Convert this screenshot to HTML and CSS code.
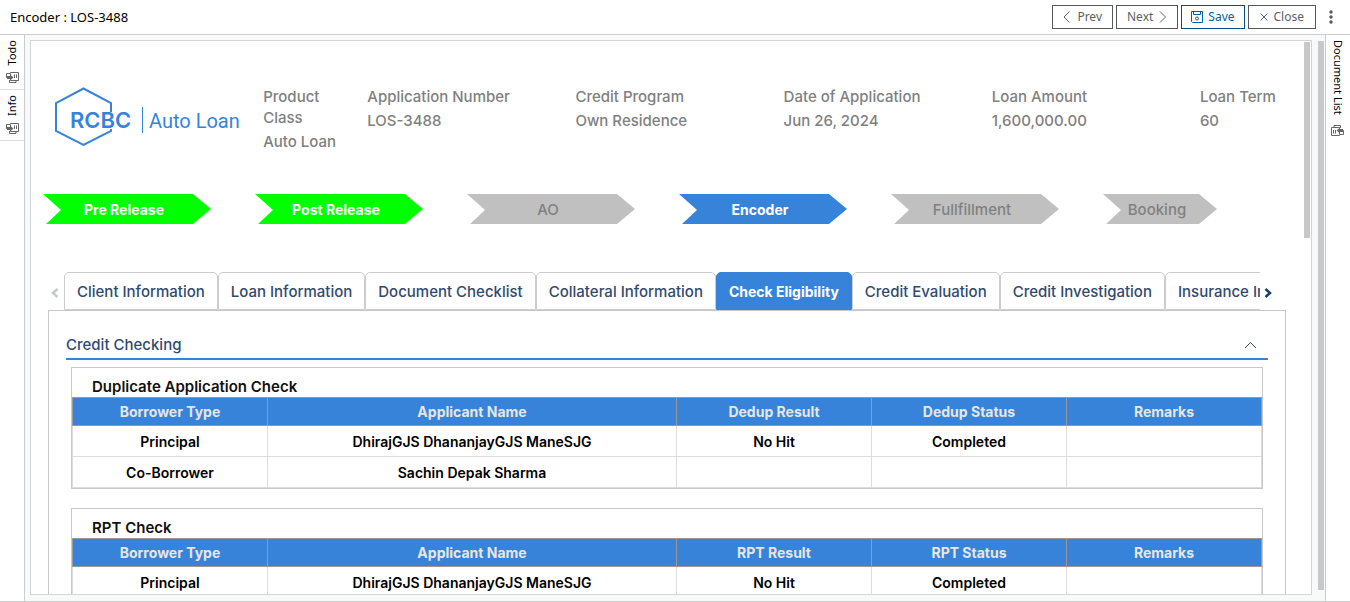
FILE: index.html
```html
<!DOCTYPE html>
<html lang="en">
<head>
<meta charset="utf-8">
<meta name="viewport" content="width=device-width, initial-scale=1">
<title>Encoder : LOS-3488</title>
<link rel="stylesheet" href="styles.css">
</head>
<body>
<svg class="defs" aria-hidden="true">
  <symbol id="restore" viewBox="0 0 13 11">
    <path d="M4.500 1.500V.5h8v8h-8zM8.500 2.500v3.500M10.500 2.500v3.500M3.500 8v2.500h6.500V8.500M4 1.500H.5v4H2" fill="none" stroke="currentColor"/>
    <path d="M1 4h3V2.500L7.500 5.500 4 8.500V7H1z" fill="currentColor"/>
  </symbol>
</svg>
<div class="app">
  <header class="topbar">
    <h1 class="topbar-title">Encoder : LOS-3488</h1>
    <div class="actions">
      <button class="btn" type="button"><svg width="8" height="12" viewBox="0 0 8 12"><path d="M6.500 .5 1 6l5.500 5.500"/></svg>Prev</button>
      <button class="btn" type="button">Next<svg width="8" height="12" viewBox="0 0 8 12"><path d="M1 .5 6.500 6 1 11.500"/></svg></button>
      <button class="btn btn-save" type="button"><svg width="12" height="12" viewBox="0 0 12 12"><path d="M.5.500h11v11H1.500l-1-1zM2.500.500v3h7v-3"/><circle cx="6" cy="7.500" r="1.500"/></svg>Save</button>
      <button class="btn btn-close" type="button"><svg width="8" height="8" viewBox="0 0 8 8"><path d="m.5.500 7 7m0-7-7 7"/></svg>Close</button>
      <button class="more" type="button" aria-label="More"><svg width="4" height="14" viewBox="0 0 4 14"><circle cx="2" cy="2" r="1.700"/><circle cx="2" cy="7" r="1.700"/><circle cx="2" cy="12" r="1.700"/></svg></button>
    </div>
  </header>
  <div class="body">
    <nav class="rail rail-left" aria-label="Side panels">
      <button class="rail-item" type="button"><span class="rail-text up">Todo</span><svg width="13" height="11"><use href="#restore"/></svg></button>
      <button class="rail-item" type="button"><span class="rail-text up">Info</span><svg width="13" height="11"><use href="#restore"/></svg></button>
    </nav>
    <main class="stage">
      <div class="panel">
        <div class="content">
          <section class="summary">
            <svg class="logo" width="186" height="62" viewBox="0 0 186 62" role="img" aria-label="RCBC Auto Loan">
              <path d="M56 26V17L28.500 2.500 1 17v28l27.500 14L56 45v-2" fill="none" stroke="currentColor" stroke-width="2"/>
              <text class="logo-brand" x="15" y="42">RCBC</text>
              <path d="M87.500 21v26" stroke="currentColor"/>
              <text class="logo-product" x="94" y="42">Auto Loan</text>
            </svg>
            <dl class="field"><dt>Product Class</dt><dd>Auto Loan</dd></dl>
            <dl class="field"><dt>Application Number</dt><dd>LOS-3488</dd></dl>
            <dl class="field"><dt>Credit Program</dt><dd>Own Residence</dd></dl>
            <dl class="field"><dt>Date of Application</dt><dd>Jun 26, 2024</dd></dl>
            <dl class="field"><dt>Loan Amount</dt><dd>1,600,000.00</dd></dl>
            <dl class="field field-last"><dt>Loan Term</dt><dd>60</dd></dl>
          </section>
          <ol class="steps">
            <li class="step done">Pre Release</li>
            <li class="step done">Post Release</li>
            <li class="step">AO</li>
            <li class="step current">Encoder</li>
            <li class="step">Fullfillment</li>
            <li class="step">Booking</li>
          </ol>
          <div class="tabbar">
            <button class="tab-arrow off" type="button" aria-label="Previous tabs"><svg width="8" height="10" viewBox="0 0 8 10"><path d="M6.500 1 2 5l4.500 4"/></svg></button>
            <div class="tabs" role="tablist">
              <button class="tab" role="tab" type="button">Client Information</button>
              <button class="tab" role="tab" type="button">Loan Information</button>
              <button class="tab" role="tab" type="button">Document Checklist</button>
              <button class="tab" role="tab" type="button">Collateral Information</button>
              <button class="tab active" role="tab" type="button" aria-selected="true">Check Eligibility</button>
              <button class="tab" role="tab" type="button">Credit Evaluation</button>
              <button class="tab" role="tab" type="button">Credit Investigation</button>
              <button class="tab" role="tab" type="button">Insurance Information</button>
            </div>
            <button class="tab-arrow" type="button" aria-label="Next tabs"><svg width="8" height="10" viewBox="0 0 8 10"><path d="M1.500 1 6 5 1.500 9"/></svg></button>
          </div>
          <section class="tab-panel">
            <button class="section-head" type="button">Credit Checking<svg width="13" height="8" viewBox="0 0 13 8"><path d="m1 7 5.500-5.500L12 7"/></svg></button>
            <div class="card">
              <h2 class="card-title">Duplicate Application Check</h2>
              <table class="grid">
                <colgroup><col class="c-type"><col class="c-name"><col class="c-type"><col class="c-type"><col class="c-type"></colgroup>
                <thead><tr><th>Borrower Type</th><th>Applicant Name</th><th>Dedup Result</th><th>Dedup Status</th><th>Remarks</th></tr></thead>
                <tbody>
                  <tr><td>Principal</td><td>DhirajGJS DhananjayGJS ManeSJG</td><td>No Hit</td><td>Completed</td><td></td></tr>
                  <tr><td>Co-Borrower</td><td>Sachin Depak Sharma</td><td></td><td></td><td></td></tr>
                </tbody>
              </table>
            </div>
            <div class="card">
              <h2 class="card-title">RPT Check</h2>
              <table class="grid">
                <colgroup><col class="c-type"><col class="c-name"><col class="c-type"><col class="c-type"><col class="c-type"></colgroup>
                <thead><tr><th>Borrower Type</th><th>Applicant Name</th><th>RPT Result</th><th>RPT Status</th><th>Remarks</th></tr></thead>
                <tbody>
                  <tr><td>Principal</td><td>DhirajGJS DhananjayGJS ManeSJG</td><td>No Hit</td><td>Completed</td><td></td></tr>
                </tbody>
              </table>
            </div>
          </section>
        </div>
        <div class="track"><div class="thumb thumb-inner"></div></div>
      </div>
      <div class="track track-outer"><div class="thumb"></div></div>
    </main>
    <aside class="rail rail-right">
      <button class="rail-item" type="button"><span class="rail-text">Document List</span><svg class="turned" width="13" height="11"><use href="#restore"/></svg></button>
    </aside>
  </div>
</div>
</body>
</html>
```
FILE: styles.css
```css
* { box-sizing: border-box; }

body {
  margin: 0;
  font-family: Inter, "Liberation Sans", sans-serif;
  font-size: 15px;
  font-weight: 500;
  background: #fff;
  color: #000;
}

button {
  font: inherit;
  color: inherit;
  background: none;
  border: 0;
  padding: 0;
}

.defs { position: absolute; width: 0; height: 0; }

.app {
  display: flex;
  flex-direction: column;
  height: 100vh;
  border-bottom: 1px solid #ccc;
}

/* Top bar */
.topbar {
  display: flex;
  justify-content: space-between;
  align-items: center;
  flex: none;
  height: 35px;
  padding: 0 17px 0 10px;
  border-bottom: 1px solid #ccc;
  font-family: "Noto Sans", "Open Sans", sans-serif;
  font-size: 12px;
  font-weight: 400;
}

.topbar-title { margin: 0; font-size: 13px; font-weight: 400; }

.actions { display: flex; align-items: center; gap: 3px; }

.btn {
  display: flex;
  align-items: center;
  gap: 6px;
  height: 24px;
  padding: 0 10px;
  border: 1px solid #55585c;
  color: #5b6066;
  line-height: 16px;
}

.btn svg, .tab-arrow svg, .section-head svg { fill: none; stroke: currentColor; }

.btn-save { gap: 5px; padding: 0 9px; border-color: #00518f; color: #005fa8; }
.btn-close { padding: 0 11px; }

.more { display: flex; padding: 0 0 0 10px; color: #55585c; }
.more svg { fill: currentColor; }

/* Body and side rails */
.body { display: flex; flex: 1; min-height: 0; }

.rail {
  flex: none;
  width: 25px;
  font-family: "Noto Sans", "Open Sans", sans-serif;
  font-size: 11px;
  font-weight: 400;
}
.rail-left { border-right: 1px solid #ccc; }
.rail-right { border-left: 1px solid #ccc; }

.rail-item {
  display: flex;
  flex-direction: column;
  align-items: center;
  gap: 7px;
  width: 100%;
  padding: 5px 0 6px;
}
.rail-left .rail-item { border-bottom: 1px solid #ddd; }
.rail-right .rail-item { gap: 10px; padding-right: 1px; }
.rail-item svg { color: #666; }
.rail-text { writing-mode: vertical-rl; line-height: 16px; }
.up { transform: rotate(180deg); }
.turned { transform: rotate(180deg); }

.stage {
  display: flex;
  flex: 1;
  min-width: 0;
  padding: 5px 1px 6px 5px;
  gap: 6px;
  background: #f8f9fb;
}

.panel {
  display: flex;
  flex: 1;
  min-width: 0;
  background: #fff;
  border: 1px solid #d2d4d6;
}

.content { flex: 1; min-width: 0; overflow: hidden; }

.track { flex: none; width: 7px; padding: 1px 1px 0 0; }
.track-outer { width: 6px; padding: 1px 0 5px; }
.thumb { height: 100%; background: #c8c8c8; }
.thumb-inner { height: 196px; }

/* Application summary */
.summary {
  display: grid;
  grid-template-columns: 2fr 1fr 2fr 2fr 2fr 2fr 1fr;
  padding: 45px 0 0 24px;
  color: #808080;
}

.logo { color: #3883da; fill: currentColor; }
.logo-brand { font: 600 22px Inter, sans-serif; }
.logo-product { font: 400 20px Roboto, sans-serif; }

.field { margin: 0; padding-right: 16px; line-height: 21px; }
.field-last { padding-right: 0; }
.field dt, .field dd { margin: 0 0 3px; }

/* Workflow steps */
.steps {
  display: grid;
  grid-template-columns: repeat(5, 1fr) 114px;
  gap: 44px;
  margin: 39px 87px 0 12px;
  padding: 0;
  list-style: none;
}

.step {
  padding: 0 6px 0 0;
  line-height: 32px;
  height: 30px;
  text-align: center;
  color: #808080;
  background: #c0c0c0;
  clip-path: polygon(0 0, calc(100% - 18px) 0, 100% 50%, calc(100% - 18px) 100%, 3px 100%, 18px 16px);
}
.done { background: #0f0; color: #fff; }
.current { background: #3883da; color: #fff; }
.done, .current { font-size: 14px; font-weight: 700; }

/* Tabs */
.tabbar { display: flex; align-items: center; margin: 48px 31px 0 20px; }

.tabs { display: flex; flex: 1; min-width: 0; overflow: hidden; }

.tab {
  flex: none;
  height: 38px;
  padding: 0 12px;
  border: 1px solid #ccc;
  border-radius: 5px 5px 0 0;
  color: #324a70;
  white-space: nowrap;
}
.active { background: #3883da; border-color: #3883da; color: #fff; font-size: 14px; font-weight: 700; }

.tab-arrow { display: flex; flex: none; margin-top: 3px; width: 13px; color: #1c3f66; }
.tab-arrow svg { stroke-width: 2.500; margin: 0 auto 0 4px; }
.off { color: #c3c9d4; }
.off svg { margin: 0; }

.tab-panel {
  margin: 0 18px 0 17px;
  padding: 20px 17px;
  border: 1px solid #c8c8c8;
}

.section-head {
  display: flex;
  justify-content: space-between;
  align-items: center;
  width: 100%;
  height: 29px;
  padding: 0 11px 0 0;
  border-bottom: 2px solid #3883da;
  color: #324a70;
}

.card { margin: 7px 5px 19px; border: 1px solid #c8c8c8; }

.card-title {
  margin: 0;
  padding: 8px 20px 0;
  font-size: 15px;
  font-weight: 600;
  line-height: 21px;
  color: #111;
}

.grid { width: 100%; table-layout: fixed; border-collapse: collapse; font-size: 14px; font-weight: 600; }
.c-type { width: 16.400%; }
.c-name { width: 34.400%; }

.grid th, .grid td { padding: 0; text-align: center; border: 1px solid #ddd; }
.grid th { height: 28px; font-weight: 700; color: #e6e6e6; background: #3883da; border-color: #999; }
.grid td { height: 31px; }
```
